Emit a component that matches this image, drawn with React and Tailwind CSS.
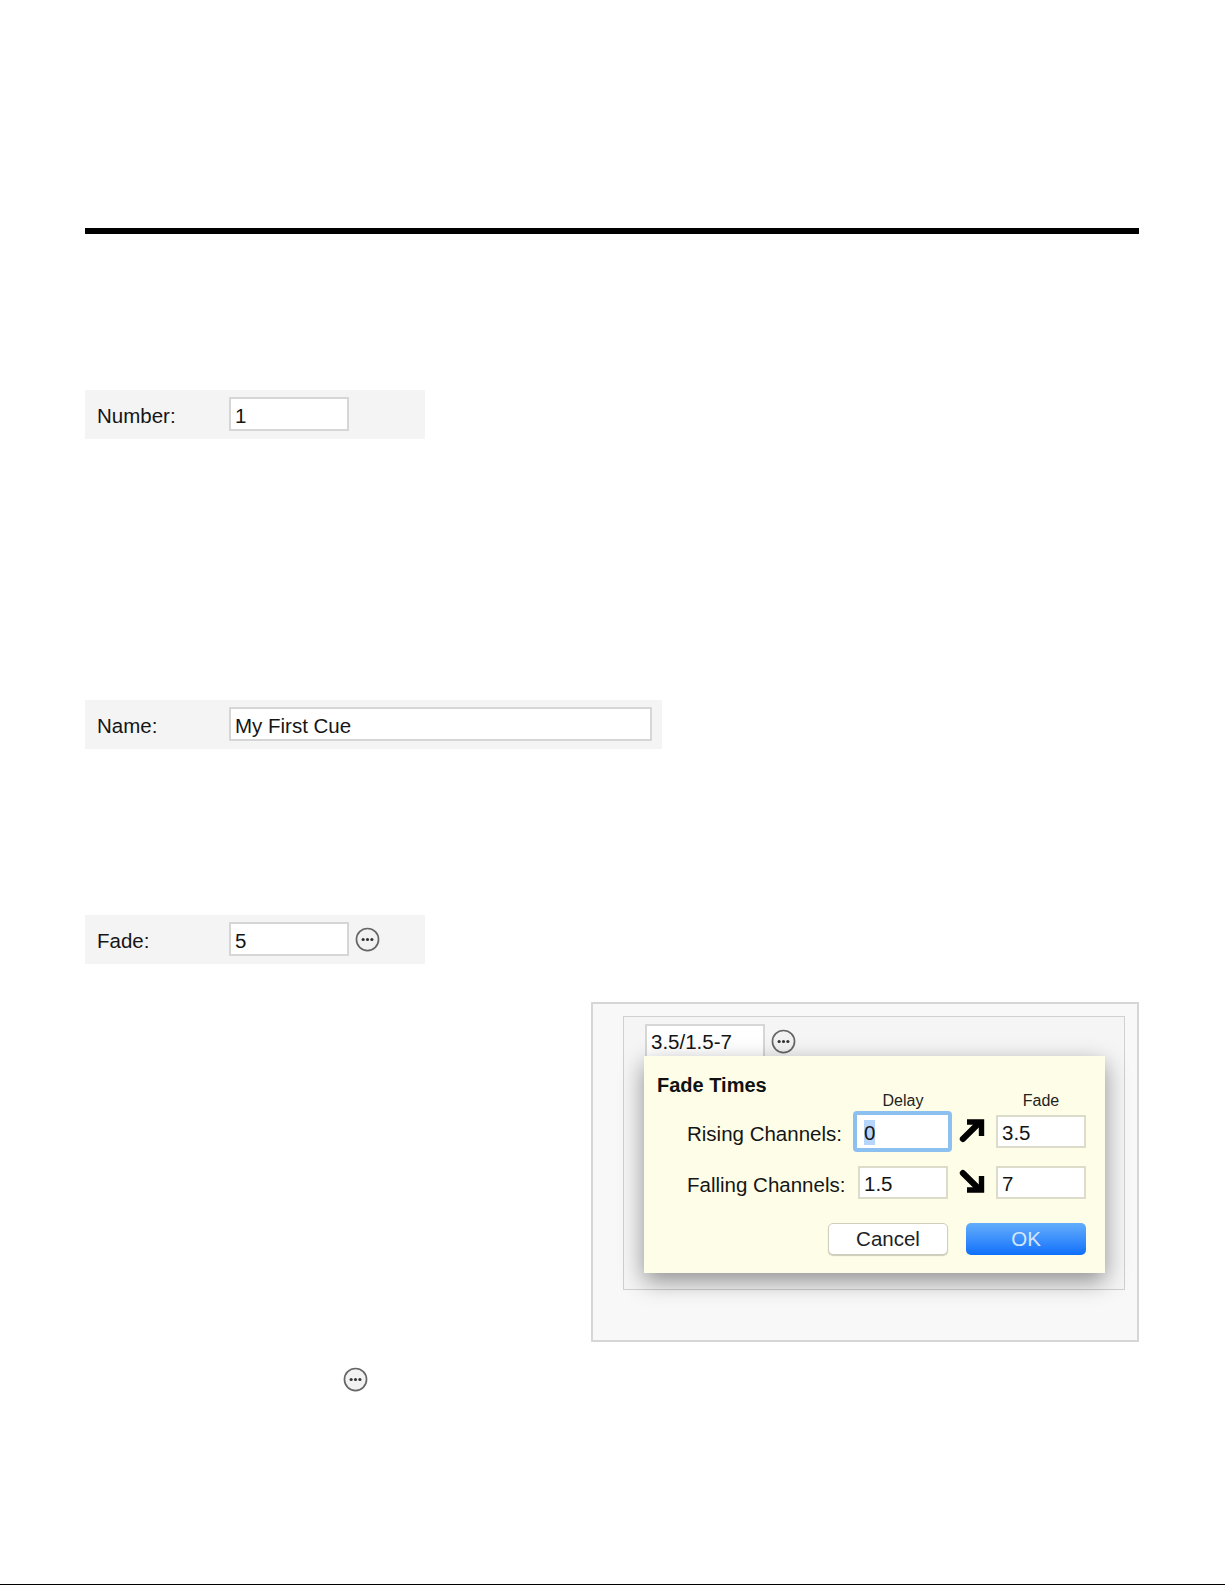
const F = "font-['Liberation_Sans',Arial,sans-serif]";

function MoreIcon({ className }) {
  return (
    <svg viewBox="0 0 24 24" className={className} aria-hidden="true">
      <circle cx="12" cy="12" r="10.6" fill="#f2f2f2" stroke="#666" strokeWidth="1.6" />
      <circle cx="7.8" cy="12" r="1.5" fill="#333" />
      <circle cx="12" cy="12" r="1.5" fill="#333" />
      <circle cx="16.2" cy="12" r="1.5" fill="#333" />
    </svg>
  );
}

function Field({ children, className = "pt-[4px]" }) {
  return (
    <div className={`w-[120px] h-[34px] -mt-[1px] bg-white border-2 border-[#d6d6d6] pl-[4px] flex items-center text-[20.5px] text-[#151515] ${className}`}>
      {children}
    </div>
  );
}

function Band({ label, width, children }) {
  return (
    <div className={`h-[49px] bg-[#f4f4f4] flex items-center pl-[12px] ${width}`}>
      <span className="w-[132px] pt-[4px] text-[20.5px] text-[#151515]">{label}</span>
      {children}
    </div>
  );
}

function PopField({ children, focus }) {
  if (focus) {
    return (
      <div className="w-[99px] h-[41px] -ml-[5px] -my-[4px] rounded-[4px] bg-[#8cc0f0] p-[4px] flex">
        <div className="flex-1 bg-white pl-[7px] pt-[2px] flex items-center text-[20.5px] text-[#151515]">
          <span className="bg-[#b5d5fb] pt-[1px]">{children}</span>
        </div>
      </div>
    );
  }
  return (
    <div className="w-[90px] h-[33px] bg-white border-2 border-[#dddbc9] pl-[4px] pt-[3px] flex items-center text-[20.5px] text-[#151515]">
      {children}
    </div>
  );
}

function ArrowUp() {
  return (
    <svg viewBox="0 0 26 26" className="w-[26px] h-[26px] -mt-[3px]" aria-hidden="true">
      <path d="M3.8 22 L18.5 7.5" fill="none" stroke="#000" strokeWidth="6" strokeLinecap="round" />
      <path d="M8 5 H22.5 V19" fill="none" stroke="#000" strokeWidth="5.4" strokeLinejoin="miter" />
    </svg>
  );
}

function ArrowDown() {
  return (
    <svg viewBox="0 0 26 26" className="w-[26px] h-[26px] -mt-[1px]" aria-hidden="true">
      <path d="M3.8 4 L18.5 18.5" fill="none" stroke="#000" strokeWidth="6" strokeLinecap="round" />
      <path d="M8 21 H22.5 V7" fill="none" stroke="#000" strokeWidth="5.4" strokeLinejoin="miter" />
    </svg>
  );
}

function Figure() {
  return (
    <div className="ml-[506px] h-[340px] w-[548px] bg-[#f8f8f8] border-2 border-[#d6d6d6] pl-[30px] pt-[12px]">
      <div className="relative w-[502px] h-[274px] bg-[#f5f5f5] border border-[#d0d0d0] pl-[21px] pt-[8px]">
        <div className="flex items-center gap-[6px]">
          <Field className="pt-[2px]">3.5/1.5-7</Field>
          <MoreIcon className="w-[25px] h-[25px]" />
        </div>
        <div className="absolute left-[20px] top-[39px] w-[461px] h-[217px] bg-[#fefee8] shadow-[0_8px_22px_rgba(0,0,0,0.42)] pl-[13px] pt-[18px]">
          <div className="font-bold text-[20px] leading-[23px] text-[#111]">Fade Times</div>
          <div className="grid grid-cols-[201px_90px_48px_90px] -mt-[6px] text-center text-[16px] leading-[20px] text-[#222]">
            <span />
            <span>Delay</span>
            <span />
            <span>Fade</span>
          </div>
          <div className="grid grid-cols-[201px_90px_48px_90px] items-center gap-y-[18px] mt-[4px] text-[20.5px] leading-[24px] text-[#151515]">
            <span className="pl-[30px] pt-[4px] whitespace-nowrap">Rising Channels:</span>
            <PopField focus>0</PopField>
            <span className="flex justify-center"><ArrowUp /></span>
            <PopField>3.5</PopField>
            <span className="pl-[30px] pt-[4px] whitespace-nowrap">Falling Channels:</span>
            <PopField>1.5</PopField>
            <span className="flex justify-center"><ArrowDown /></span>
            <PopField>7</PopField>
          </div>
          <div className="flex justify-end gap-[18px] mt-[24px] pr-[19px] text-[20.5px]">
            <div className="w-[120px] h-[32px] rounded-[5px] bg-white border border-[#cfcdbc] shadow-[0_1px_1px_rgba(0,0,0,0.2)] flex items-center justify-center text-[#222]">Cancel</div>
            <div className="w-[120px] h-[32px] rounded-[5px] bg-gradient-to-b from-[#63adfb] to-[#0a6ffb] flex items-center justify-center text-[#d4e6fd]">OK</div>
          </div>
        </div>
      </div>
    </div>
  );
}

export default function App() {
  return (
    <div className={`${F} relative bg-white w-[1225px] h-[1585px] pl-[85px] pt-[228px] overflow-hidden`}>
      <div className="w-[1054px] h-[6px] bg-black" />
      <div className="mt-[156px]">
        <Band label="Number:" width="w-[340px]">
          <Field>1</Field>
        </Band>
      </div>
      <div className="mt-[261px]">
        <Band label="Name:" width="w-[577px]">
          <Field className="pt-[4px] !w-[423px]">My First Cue</Field>
        </Band>
      </div>
      <div className="mt-[166px]">
        <Band label="Fade:" width="w-[340px]">
          <Field>5</Field>
          <MoreIcon className="w-[25px] h-[25px] ml-[6px]" />
        </Band>
      </div>
      <div className="mt-[38px]">
        <Figure />
      </div>
      <MoreIcon className="w-[25px] h-[25px] ml-[258px] mt-[25px]" />
      <div className="absolute left-0 right-0 bottom-0 h-px bg-black" />
    </div>
  );
}
